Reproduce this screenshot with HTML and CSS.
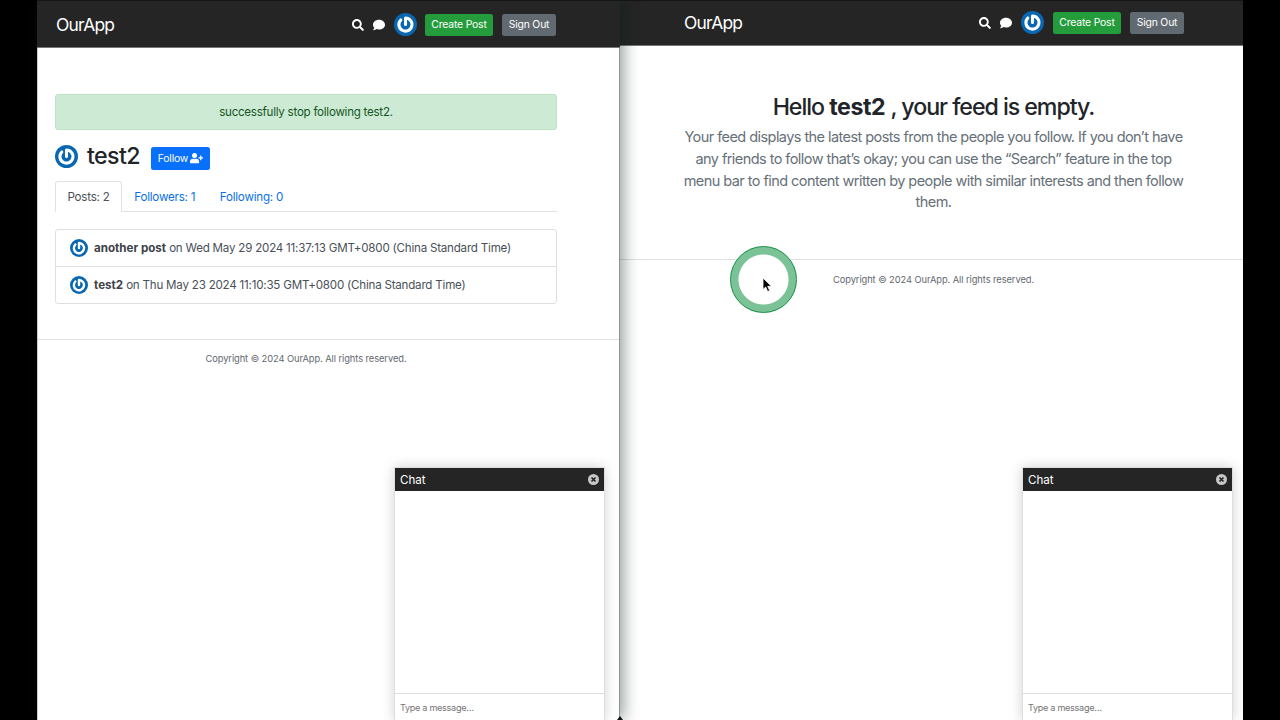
FILE: index.html
```html
<!DOCTYPE html>
<html lang="en">
<head>
<meta charset="utf-8">
<title>OurApp</title>
<link rel="stylesheet" href="styles.css">
</head>
<body>
<svg class="defs" aria-hidden="true">
  <symbol id="avatar" viewBox="0 0 24 24">
    <circle cx="12" cy="12" r="12" fill="#0967b2"/>
    <path d="M12 12V5.300A6.800 6.800 0 1 1 7.100 7.300" fill="none" stroke="#fff" stroke-width="3.200" stroke-linecap="round" stroke-linejoin="round"/>
  </symbol>
  <symbol id="search" viewBox="0 0 512 512"><path fill="currentColor" d="M505 442.700L405.300 343c-4.500-4.500-10.600-7-17-7H372c27.600-35.300 44-79.700 44-128C416 93.100 322.900 0 208 0S0 93.100 0 208s93.100 208 208 208c48.300 0 92.700-16.400 128-44v16.300c0 6.400 2.500 12.500 7 17l99.700 99.700c9.400 9.400 24.600 9.400 33.900 0l28.300-28.300c9.400-9.400 9.400-24.600.1-34zM208 336c-70.700 0-128-57.200-128-128 0-70.700 57.200-128 128-128 70.700 0 128 57.200 128 128 0 70.700-57.200 128-128 128z"/></symbol>
  <symbol id="comment" viewBox="0 0 512 512"><path fill="currentColor" d="M256 32C114.600 32 0 125.100 0 240c0 49.600 21.400 95 57 130.700C44.500 421.100 2.700 466 2.200 466.500c-2.200 2.300-2.800 5.700-1.500 8.700S4.800 480 8 480c66.300 0 116-31.800 140.600-51.400 32.700 12.300 69 19.400 107.400 19.400 141.400 0 256-93.100 256-208S397.400 32 256 32z"/></symbol>
  <symbol id="user-plus" viewBox="0 0 640 512"><path fill="currentColor" d="M624 208h-64v-64c0-8.800-7.200-16-16-16h-32c-8.800 0-16 7.200-16 16v64h-64c-8.800 0-16 7.200-16 16v32c0 8.800 7.200 16 16 16h64v64c0 8.800 7.200 16 16 16h32c8.800 0 16-7.200 16-16v-64h64c8.800 0 16-7.200 16-16v-32c0-8.800-7.200-16-16-16zm-400 48c70.700 0 128-57.300 128-128S294.700 0 224 0 96 57.300 96 128s57.300 128 128 128zm89.600 32h-16.700c-22.200 10.200-46.900 16-72.900 16s-50.600-5.800-72.900-16h-16.700C60.200 288 0 348.200 0 422.400V464c0 26.500 21.500 48 48 48h352c26.500 0 48-21.500 48-48v-41.600c0-74.200-60.200-134.400-134.400-134.400z"/></symbol>
  <symbol id="close" viewBox="0 0 16 16"><circle cx="8" cy="8" r="8" fill="#c6c6c6"/><path d="M5.100 5.100l5.800 5.800M10.900 5.100l-5.800 5.800" stroke="#252525" stroke-width="2.500"/></symbol>
</svg>

<div class="screen">
  <section class="window window-left">
    <header class="navbar">
      <div class="container bar">
        <a class="brand">OurApp</a>
        <nav class="actions">
          <svg class="icon search"><use href="#search"/></svg>
          <svg class="icon comment"><use href="#comment"/></svg>
          <svg class="avatar"><use href="#avatar"/></svg>
          <a class="btn create">Create Post</a>
          <a class="btn signout">Sign Out</a>
        </nav>
      </div>
    </header>
    <main class="container profile">
      <div class="alert"><span>successfully stop following test2.</span></div>
      <h2 class="profile-head">
        <svg class="avatar"><use href="#avatar"/></svg>
        <span class="name">test2</span>
        <a class="btn follow">Follow <svg class="plus"><use href="#user-plus"/></svg></a>
      </h2>
      <div class="tabs">
        <a class="tab active">Posts: 2</a>
        <a class="tab">Followers: 1</a>
        <a class="tab">Following: 0</a>
      </div>
      <div class="list">
        <a class="item"><svg class="avatar-sm"><use href="#avatar"/></svg><span><strong>another post</strong> on Wed May 29 2024 11:37:13 GMT+0800 (China Standard Time)</span></a>
        <a class="item"><svg class="avatar-sm"><use href="#avatar"/></svg><span><strong>test2</strong> on Thu May 23 2024 11:10:35 GMT+0800 (China Standard Time)</span></a>
      </div>
    </main>
    <footer class="footer"><span>Copyright © 2024 OurApp. All rights reserved.</span></footer>
    <aside class="chat">
      <div class="chat-title"><span>Chat</span><svg class="close"><use href="#close"/></svg></div>
      <div class="chat-log"></div>
      <div class="chat-input">Type a message…</div>
    </aside>
  </section>

  <section class="window window-right">
    <header class="navbar">
      <div class="container bar">
        <a class="brand">OurApp</a>
        <nav class="actions">
          <svg class="icon search"><use href="#search"/></svg>
          <svg class="icon comment"><use href="#comment"/></svg>
          <svg class="avatar"><use href="#avatar"/></svg>
          <a class="btn create">Create Post</a>
          <a class="btn signout">Sign Out</a>
        </nav>
      </div>
    </header>
    <main class="container feed">
      <h2 class="feed-title">Hello <strong>test2</strong> , your feed is empty.</h2>
      <p class="lead">Your feed displays the latest posts from the people you follow. If you don’t have<br>any friends to follow that’s okay; you can use the “Search” feature in the top<br>menu bar to find content written by people with similar interests and then follow<br>them.</p>
    </main>
    <footer class="footer"><span>Copyright © 2024 OurApp. All rights reserved.</span></footer>
    <aside class="chat">
      <div class="chat-title"><span>Chat</span><svg class="close"><use href="#close"/></svg></div>
      <div class="chat-log"></div>
      <div class="chat-input">Type a message…</div>
    </aside>
  </section>

  <div class="click-ring"></div>
  <svg class="pointer" viewBox="0 0 12 17"><path d="M1 1v11.500l2.700-2.500 2 4.500 2-.9-2-4.300H9.500z" fill="#000" stroke="#fff" stroke-width=".8"/></svg>
  <div class="notch"></div>
</div>
</body>
</html>
```

FILE: styles.css
```css
* { box-sizing: border-box; }
body {
  margin: 0;
  background: #000;
  color: #212529;
  font-family: Inter, "Liberation Sans", sans-serif;
  font-size: 11.6px;
  line-height: 1.5;
}
svg { display: block; flex: none; }
.defs { position: absolute; width: 0; height: 0; }
.screen {
  position: relative;
  display: flex;
  width: 1280px;
  height: 720px;
  padding: 0 37px;
  overflow: hidden;
}
.window { position: relative; height: 720px; background: #fff; }
.window-left {
  z-index: 1;
  width: 583px;
  border-left: 1px solid #ccc;
  border-right: 1px solid #8d9492;
  box-shadow: 3px 0 15px rgba(0, 30, 20, .45);
}
.window-right { width: 623px; }
.container { width: 501px; }
.window-left .container { margin-left: 17px; }
.window-left .profile { width: 502px; }
.window-right .container { margin-left: 63px; }

.navbar {
  background: #252525;
  border-top: 1px solid #151515;
  border-bottom: 1px solid #777;
}
.window-left .navbar { height: 48px; margin: 0 -1px; padding-left: 1px; }
.window-right .navbar { height: 46px; }
.bar { display: flex; align-items: center; justify-content: space-between; height: 100%; }
.window-right .bar { padding-bottom: 1px; }
.brand { color: #fff; font-size: 17.4px; letter-spacing: -.75px; padding: 1px 0 0 1px; }
.window-left .brand { padding-top: 2px; }
.actions { display: flex; align-items: center; }
.window-left .actions { padding-top: 1px; }
.icon { width: 12px; height: 12px; color: #fff; }
.comment { margin-left: 8.500px; }
.actions .avatar { margin: 0 9px; }
.window-left .actions .avatar { margin: 0 8.500px 0 9px; }
.window-right .actions .avatar { margin-right: 9.500px; }
.avatar { width: 23px; height: 23px; }
.btn {
  display: flex;
  align-items: center;
  justify-content: center;
  height: 22px;
  border-radius: 2.500px;
  color: #fff;
  font-size: 10.4px;
  letter-spacing: -.18px;
  white-space: nowrap;
}
.create { width: 68px; background: #259c3b; }
.signout { width: 54px; margin-left: 9px; background: #626a71; }

.profile { padding-top: 46px; height: 291px; }
.alert {
  height: 36px;
  display: flex;
  align-items: center;
  justify-content: center;
  padding-top: 2px;
  background: #cdead4;
  border: 1px solid #bfe3c7;
  border-radius: 3px;
  color: #155724;
  letter-spacing: -.26px;
}
.profile-head {
  display: flex;
  align-items: center;
  height: 30px;
  margin: 11px 0 10px;
  font-weight: 500;
}
.name { margin-left: 9px; font-size: 23.2px; letter-spacing: -.6px; }
.follow { width: 59px; height: 23px; margin: 5px 0 0 11px; background: #0870fb; font-weight: 400; }
.plus { width: 13px; height: 10.400px; margin-left: 2px; }
.tabs { display: flex; height: 31px; border-bottom: 1px solid #dee2e6; letter-spacing: -.22px; }
.tab { height: 31px; padding: 8px 12.300px 0; color: #0870e8; }
.active {
  width: 67px;
  padding: 7px 11.500px 0;
  border: 1px solid #dee2e6;
  border-bottom-color: #fff;
  border-radius: 3px 3px 0 0;
  color: #495057;
  white-space: nowrap;
}
.list { margin-top: 17px; border: 1px solid #dfdfdf; border-radius: 3px; color: #495057; }
.item { display: flex; align-items: center; height: 36px; padding-left: 14px; gap: 6px; white-space: nowrap; letter-spacing: -.22px; }
.item + .item { height: 37px; border-top: 1px solid #dfdfdf; }
.item span { padding-top: 2px; }
.item strong { font-weight: 700; color: #3c4248; letter-spacing: 0; }
.avatar-sm { width: 18px; height: 18px; }

.footer {
  border-top: 1px solid #dfdfdf;
  color: #5f686f;
  font-size: 9.3px;
  letter-spacing: -.07px;
  text-align: center;
  padding-top: 12px;
}
.window-left .footer { padding-right: 45px; }
.window-right .footer { padding: 13px 0 0 4px; }

.feed { height: 213px; padding-top: 48px; text-align: center; white-space: nowrap; }
.feed-title { margin: 0; font-size: 23.2px; line-height: 26px; font-weight: 500; letter-spacing: -1.04px; }
.feed-title strong { letter-spacing: -.4px; }
.lead { margin: 6px 0 0; color: #667078; font-size: 14.5px; line-height: 21.800px; letter-spacing: -.56px; }

.chat {
  position: absolute;
  right: 14px;
  bottom: 0;
  width: 211px;
  height: 253px;
  display: flex;
  flex-direction: column;
  background: #fff;
  border: 1px solid #dcdfdf;
  border-bottom: 0;
  box-shadow: 0 0 12px rgba(0, 0, 0, .18);
}
.window-right .chat { right: 10px; }
.chat-title {
  display: flex;
  align-items: center;
  justify-content: space-between;
  height: 23px;
  padding: 0 5px;
  background: #252525;
  color: #fff;
}
.chat-title span { padding-top: 2px; }
.close { width: 11px; height: 11px; }
.chat-log { flex: 1; border-bottom: 1px solid #dcdfdf; }
.chat-input { height: 26px; padding: 7px 5px; color: #757575; font-size: 9.1px; letter-spacing: -.3px; }

.click-ring {
  position: absolute;
  z-index: 2;
  left: 730px;
  top: 246px;
  width: 67px;
  height: 67px;
  border: 1.500px solid #148f44;
  border-radius: 50%;
  background: radial-gradient(circle, #fff 24.500px, #7bc296 25.500px);
}
.pointer { position: absolute; z-index: 3; left: 762px; top: 277px; width: 12px; height: 17px; }
.notch {
  position: absolute;
  z-index: 3;
  left: 617px;
  bottom: 0;
  border: 3px solid transparent;
  border-top: 0;
  border-bottom: 4px solid #111;
}
```
